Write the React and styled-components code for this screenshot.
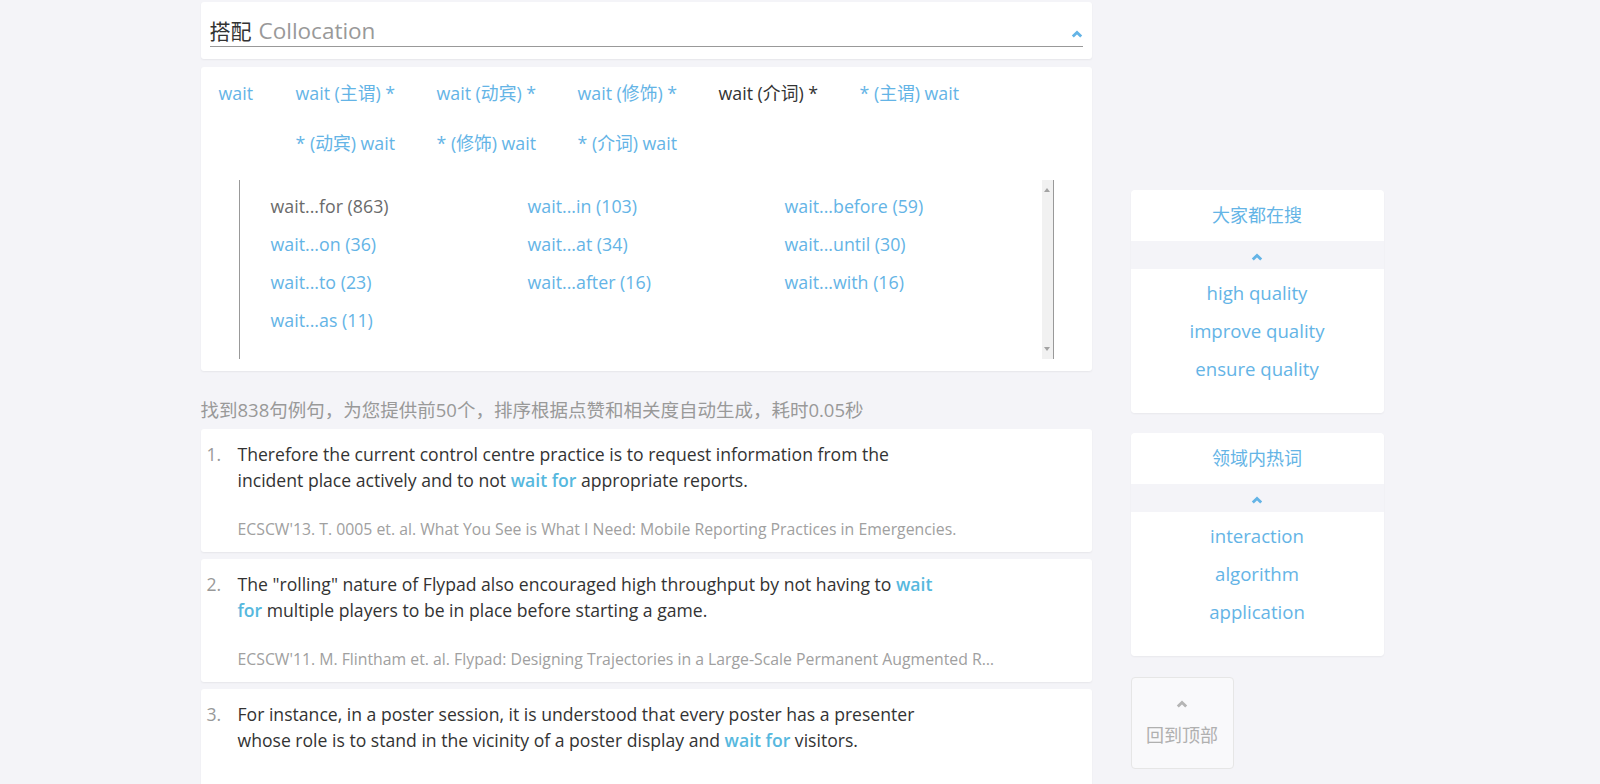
import styled, { createGlobalStyle } from 'styled-components';

const GlobalStyle = createGlobalStyle`
    html, body {
        margin: 0;
        padding: 0;
        background: #f4f4f8;
    }
    body {
        font-family: "Open Sans", "Noto Sans CJK SC", sans-serif;
        color: #333;
    }
`;

const BLUE = '#64b4e6';

const Page = styled.div`
    width: 1200px;
    margin: 0 auto;
    padding: 2px 0 0 1px;
    display: grid;
    grid-template-columns: 891px 253px;
    column-gap: 39px;
    align-items: start;
`;

const Main = styled.div`
    display: flex;
    flex-direction: column;
`;

const Card = styled.div`
    background: #fff;
    border-radius: 3px;
    box-shadow: 0 1px 2px rgba(0, 0, 0, 0.06);
`;

const TitleCard = styled(Card)`
    height: 57px;
    box-sizing: border-box;
    padding: 14px 9px 0;
`;

const TitleBar = styled.div`
    display: flex;
    justify-content: space-between;
    align-items: center;
    height: 30px;
    border-bottom: 1px solid #999;
`;

const Title = styled.h2`
    margin: 0;
    font-size: 21px;
    font-weight: 400;
    line-height: 30px;
    color: #333;

    span {
        color: #999;
        margin-left: 7px;
        font-size: 22.5px;
    }
`;

const Chevron = ({ color = BLUE }) => (
    <svg width="12" height="8" viewBox="0 0 12 8">
        <path d="M1.8 6.6 L6 2.4 L10.2 6.6" fill="none" stroke={color} strokeWidth="2.8" />
    </svg>
);

const TitleCaret = styled.div`
    display: flex;
    margin: 6px 0 0;
`;

const CollocCard = styled(Card)`
    margin-top: 8px;
    padding: 1px 38px 12px 0;
`;

const TabArea = styled.div`
    display: flex;
    padding-left: 18px;
`;

const TabLabel = styled.div`
    width: 77px;
    font-size: 17.8px;
    line-height: 50px;
    color: ${BLUE};
`;

const TabGrid = styled.div`
    display: grid;
    grid-template-columns: repeat(5, 141px);
`;

const Tab = styled.div`
    font-size: 17.8px;
    line-height: 50px;
    white-space: nowrap;
    color: ${p => (p.$active ? '#333' : BLUE)};
`;

const ListBox = styled.div`
    display: flex;
    margin: 12px 0 0 38px;
    height: 179px;
    border-left: 1px solid #999;
    border-right: 1px solid #999;
`;

const ListGrid = styled.div`
    flex: 1;
    display: grid;
    grid-template-columns: repeat(3, 257px);
    grid-auto-rows: 38px;
    align-content: start;
    padding: 7px 0 0 31px;
`;

const ListItem = styled.div`
    font-size: 17.8px;
    line-height: 38px;
    white-space: nowrap;
    color: ${p => (p.$active ? '#6b6b6b' : BLUE)};
`;

const Scrollbar = styled.div`
    width: 17px;
    background: #f1f1f1;
    display: flex;
    flex-direction: column;
    justify-content: space-between;
    align-items: center;
    padding: 8px 0 8px;
    box-sizing: border-box;
`;

const Arrow = styled.div`
    width: 0;
    height: 0;
    border-left: 3.5px solid transparent;
    border-right: 3.5px solid transparent;
    ${p => (p.$down
        ? 'border-top: 4px solid #a3a3a3;'
        : 'border-bottom: 4px solid #a3a3a3;')}
`;

const Caption = styled.p`
    margin: 28px 0 0;
    font-size: 18.5px;
    line-height: 22px;
    color: #999;
`;

const SentenceCard = styled(Card)`
    display: flex;
    margin-top: ${p => (p.$first ? '8px' : '7px')};
    padding: 12px 0 13px 6px;
`;

const Num = styled.div`
    width: 31px;
    font-size: 17.6px;
    line-height: 26px;
    color: #999;
`;

const SentenceBody = styled.div`
    display: flex;
    flex-direction: column;
`;

const Sentence = styled.p`
    margin: 0;
    width: 706px;
    font-size: 17.6px;
    line-height: 26px;
    color: #333;

    b {
        font-weight: 600;
        color: #56b8de;
    }
`;

const Source = styled.p`
    margin: 26px 0 0;
    width: 762px;
    font-size: 15.8px;
    line-height: 20px;
    color: #a0a0a0;
    white-space: nowrap;
    overflow: hidden;
    text-overflow: ellipsis;
`;

const Side = styled.div`
    display: flex;
    flex-direction: column;
    padding-top: 188px;
`;

const HotBox = styled.div`
    border-radius: 4px;
    overflow: hidden;
    margin-bottom: 20px;
    box-shadow: 0 1px 2px rgba(0, 0, 0, 0.05);
`;

const HotHeader = styled.div`
    height: 51px;
    line-height: 51px;
    background: #fff;
    text-align: center;
    font-size: 18px;
    color: ${BLUE};
`;

const HotBand = styled.div`
    height: 28px;
    display: flex;
    justify-content: center;
    align-items: center;
    padding-top: 4px;
    box-sizing: border-box;
    background: #f4f4f8;
`;

const HotBody = styled.div`
    background: #fff;
    padding: 5px 0 25px;
    text-align: center;
`;

const HotItem = styled.div`
    font-size: 18.6px;
    line-height: 38px;
    color: ${BLUE};
`;

const BackTop = styled.div`
    width: 103px;
    height: 92px;
    box-sizing: border-box;
    margin-top: 1px;
    background: #f9f9fb;
    border: 1px solid #e6e6e6;
    border-radius: 4px;
    display: flex;
    flex-direction: column;
    align-items: center;
    padding-top: 22px;
    color: #b0b0b0;
    font-size: 18px;

    span {
        margin-top: 15px;
        line-height: 24px;
    }
`;

const tabs = ['wait (主谓) *', 'wait (动宾) *', 'wait (修饰) *', 'wait (介词) *', '* (主谓) wait', '* (动宾) wait', '* (修饰) wait', '* (介词) wait'];

const items = ['wait...for (863)', 'wait...in (103)', 'wait...before (59)', 'wait...on (36)', 'wait...at (34)', 'wait...until (30)', 'wait...to (23)', 'wait...after (16)', 'wait...with (16)', 'wait...as (11)'];

const sentences = [
    {
        text: <>Therefore the current control centre practice is to request information from the incident place actively and to not <b>wait for</b> appropriate reports.</>,
        source: "ECSCW'13. T. 0005 et. al. What You See is What I Need: Mobile Reporting Practices in Emergencies.",
    },
    {
        text: <>The "rolling" nature of Flypad also encouraged high throughput by not having to <b>wait for</b> multiple players to be in place before starting a game.</>,
        source: "ECSCW'11. M. Flintham et. al. Flypad: Designing Trajectories in a Large-Scale Permanent Augmented Reality Installation",
    },
    {
        text: <>For instance, in a poster session, it is understood that every poster has a presenter whose role is to stand in the vicinity of a poster display and <b>wait for</b> visitors.</>,
        source: '\u00a0',
    },
];

const hotBoxes = [
    { title: '大家都在搜', words: ['high quality', 'improve quality', 'ensure quality'] },
    { title: '领域内热词', words: ['interaction', 'algorithm', 'application'] },
];

const App = () => {
    return (
        <>
            <GlobalStyle />
            <Page>
                <Main>
                    <TitleCard>
                        <TitleBar>
                            <Title>搭配<span>Collocation</span></Title>
                            <TitleCaret><Chevron /></TitleCaret>
                        </TitleBar>
                    </TitleCard>

                    <CollocCard>
                        <TabArea>
                            <TabLabel>wait</TabLabel>
                            <TabGrid>
                                {tabs.map(t => (
                                    <Tab key={t} $active={t === 'wait (介词) *'}>{t}</Tab>
                                ))}
                            </TabGrid>
                        </TabArea>
                        <ListBox>
                            <ListGrid>
                                {items.map((it, i) => (
                                    <ListItem key={it} $active={i === 0}>{it}</ListItem>
                                ))}
                            </ListGrid>
                            <Scrollbar>
                                <Arrow />
                                <Arrow $down />
                            </Scrollbar>
                        </ListBox>
                    </CollocCard>

                    <Caption>找到838句例句，为您提供前50个，排序根据点赞和相关度自动生成，耗时0.05秒</Caption>

                    {sentences.map((s, i) => (
                        <SentenceCard key={i} $first={i === 0}>
                            <Num>{i + 1}.</Num>
                            <SentenceBody>
                                <Sentence>{s.text}</Sentence>
                                <Source>{s.source}</Source>
                            </SentenceBody>
                        </SentenceCard>
                    ))}
                </Main>

                <Side>
                    {hotBoxes.map(box => (
                        <HotBox key={box.title}>
                            <HotHeader>{box.title}</HotHeader>
                            <HotBand><Chevron /></HotBand>
                            <HotBody>
                                {box.words.map(w => <HotItem key={w}>{w}</HotItem>)}
                            </HotBody>
                        </HotBox>
                    ))}
                    <BackTop>
                        <Chevron color="#b5b5b5" />
                        <span>回到顶部</span>
                    </BackTop>
                </Side>
            </Page>
        </>
    );
};

export default App;
